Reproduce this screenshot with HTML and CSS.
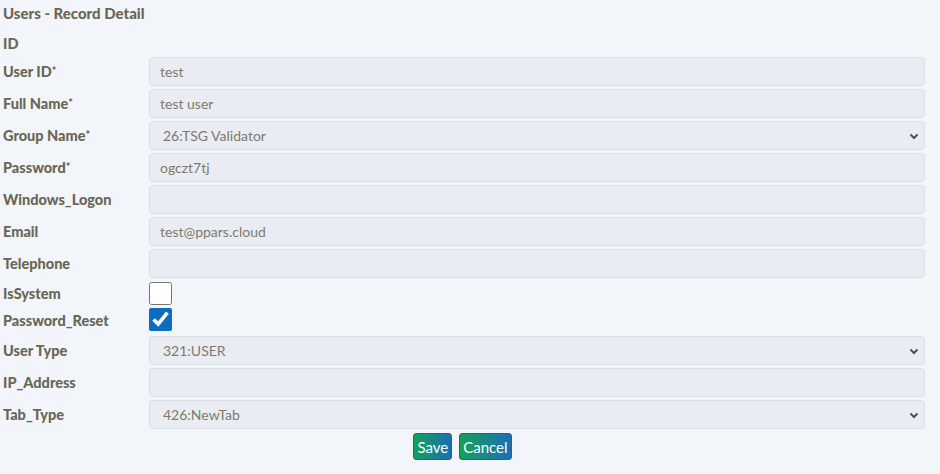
FILE: index.html
```html
<!DOCTYPE html>
<html lang="en">
<head>
    <meta charset="UTF-8">
    <meta name="viewport" content="width=device-width, initial-scale=1.0">
    <title>Users - Record Detail</title>
    <link rel="stylesheet" href="styles.css">
</head>
<body>
    <div class="container">
        <h1 class="title">Users - Record Detail</h1>

        <form class="record-form" onsubmit="return false;">
            <label class="field-label id-row">ID</label>
            <span class="id-row"></span>

            <label class="field-label" for="userId">User ID<span class="req">*</span></label>
            <input type="text" id="userId" class="field" value="test">

            <label class="field-label" for="fullName">Full Name<span class="req">*</span></label>
            <input type="text" id="fullName" class="field" value="test user">

            <label class="field-label" for="groupName">Group Name<span class="req">*</span></label>
            <select id="groupName" class="field select">
                <option>26:TSG Validator</option>
            </select>

            <label class="field-label" for="password">Password<span class="req">*</span></label>
            <input type="text" id="password" class="field" value="ogczt7tj">

            <label class="field-label" for="winLogon">Windows_Logon</label>
            <input type="text" id="winLogon" class="field" value="">

            <label class="field-label" for="email">Email</label>
            <input type="text" id="email" class="field" value="test@ppars.cloud">

            <label class="field-label" for="telephone">Telephone</label>
            <input type="text" id="telephone" class="field" value="">

            <label class="field-label check-row" for="isSystem">IsSystem</label>
            <div class="check-row"><input type="checkbox" id="isSystem" class="check"></div>

            <label class="field-label check-row" for="pwReset">Password_Reset</label>
            <div class="check-row last"><input type="checkbox" id="pwReset" class="check" checked></div>

            <label class="field-label" for="userType">User Type</label>
            <select id="userType" class="field select">
                <option>321:USER</option>
            </select>

            <label class="field-label" for="ipAddress">IP_Address</label>
            <input type="text" id="ipAddress" class="field" value="">

            <label class="field-label" for="tabType">Tab_Type</label>
            <select id="tabType" class="field select">
                <option>426:NewTab</option>
            </select>
        </form>

        <div class="actions">
            <button class="btn">Save</button>
            <button class="btn">Cancel</button>
        </div>
    </div>
</body>
</html>
```

FILE: styles.css
```css
body {
    font-family: Lato, "Open Sans", sans-serif;
    margin: 0;
    padding: 0;
    background-color: #f2f5fa;
    color: #6a6656;
}
.container {
    width: 925px;
    padding-top: 3px;
}
.title {
    margin: 0 0 11px 3px;
    font-size: 15px;
    line-height: 20px;
    font-weight: 900;
}
.record-form {
    display: grid;
    grid-template-columns: 149px 1fr;
    row-gap: 3px;
    align-items: center;
}
.field-label {
    padding-left: 3px;
    font-size: 14.5px;
    font-weight: 900;
}
.req {
    font-size: 11px;
    vertical-align: 2px;
}
.id-row {
    height: 20px;
    line-height: 20px;
}
.check-row {
    height: 24px;
    display: flex;
    align-items: center;
}
.check-row.last {
    height: 25px;
    align-items: flex-start;
}
.field {
    box-sizing: border-box;
    height: 29px;
    width: 100%;
    margin: 0;
    padding: 0 10px;
    font-family: Lato, "Open Sans", sans-serif;
    font-size: 14px;
    color: #7d7a6c;
    background-color: #e9edf3;
    border: 1px solid #dce0e6;
    border-radius: 4px;
    outline: none;
}
.select {
    appearance: none;
    padding-left: 13px;
    background-image: url("data:image/svg+xml,%3Csvg xmlns='http://www.w3.org/2000/svg' width='12' height='8' viewBox='0 0 12 8'%3E%3Cpath d='M2.5 2.5l3.5 3.5 3.5-3.5' fill='none' stroke='%23505050' stroke-width='2'/%3E%3C/svg%3E");
    background-repeat: no-repeat;
    background-position: right 4px center;
}
.check {
    width: 23px;
    height: 23px;
    margin: 0;
    accent-color: #0b6dc0;
}
.actions {
    display: flex;
    justify-content: center;
    gap: 7px;
    margin-top: 4px;
}
.btn {
    height: 27px;
    padding: 0 3px;
    font-family: Lato, "Open Sans", sans-serif;
    font-size: 15px;
    color: #fff;
    background: linear-gradient(90deg, #16a05a, #1a6fb5);
    border: 1px solid #555;
    border-radius: 3px;
    cursor: pointer;
}
```
